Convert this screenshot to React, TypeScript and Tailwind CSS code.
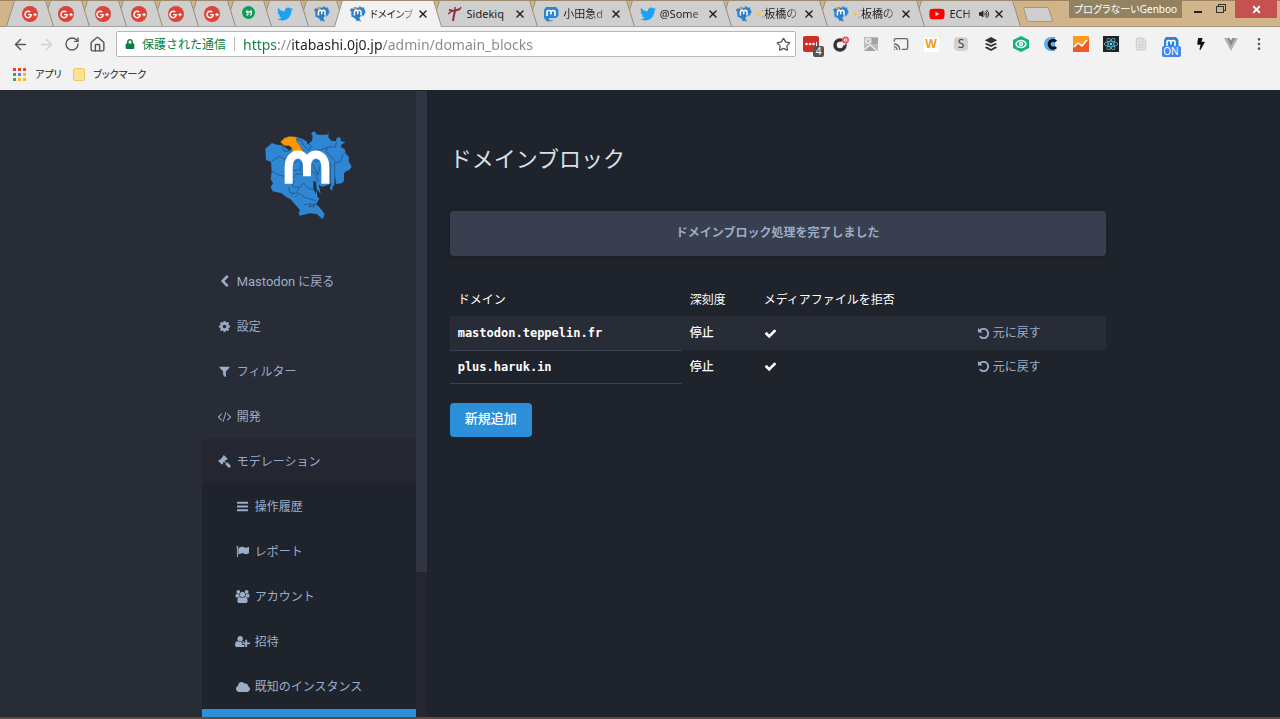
import type { ReactNode } from 'react';
import {
  FaBolt,
  FaCloud,
  FaGooglePlusG,
  FaLock,
  FaQuoteRight,
  FaReact,
  FaTwitter,
  FaVolumeUp,
  FaYoutube,
} from 'react-icons/fa';
import { SiBuffer } from 'react-icons/si';
import {
  ArrowLeft,
  ArrowRight,
  Cast,
  Eye,
  FileText,
  House,
  MoreVertical,
  RotateCw,
  Star,
  X,
} from 'lucide-react';

const glyphs = {
  back: 'M1427 301l-531 531 531 531q19 19 19 45t-19 45l-166 166q-19 19-45 19t-45-19l-742-742q-19-19-19-45t19-45l742-742q19-19 45-19t45 19l166 166q19 19 19 45t-19 45z',
  cog: 'M1152 896q0-106-75-181t-181-75-181 75-75 181 75 181 181 75 181-75 75-181zm512-109v222q0 12-8 23t-20 13l-185 28q-19 54-39 91 35 50 107 138 10 12 10 25t-9 23q-27 37-99 108t-94 71q-12 0-26-9l-138-108q-44 23-91 38-16 136-29 186-7 28-36 28h-222q-14 0-24.5-8.500t-11.500-21.500l-28-184q-49-16-90-37l-141 107q-10 9-25 9-14 0-25-11-126-114-165-168-7-10-7-23 0-12 8-23 15-21 51-66.500t54-70.500q-27-50-41-99l-183-27q-13-2-21-12.500t-8-23.500v-222q0-12 8-23t19-13l186-28q14-46 39-92-40-57-107-138-10-12-10-24 0-10 9-23 26-36 98.500-107.500t94.500-71.500q13 0 26 10l138 107q44-23 91-38 16-136 29-186 7-28 36-28h222q14 0 24.500 8.500t11.500 21.500l28 184q49 16 90 37l142-107q9-9 24-9 13 0 25 10 129 119 165 170 7 8 7 22 0 12-8 23-15 21-51 66.500t-54 70.500q26 50 41 98l183 28q13 2 21 12.500t8 23.500z',
  filter:
    'M1595 295q17 41-14 70l-493 493v742q0 42-39 59-13 5-25 5-27 0-45-19l-256-256q-19-19-19-45v-486l-493-493q-31-29-14-70 17-39 59-39h1280q42 0 59 39z',
  code: 'M553 1399l-50 50q-10 10-23 10t-23-10l-466-466q-10-10-10-23t10-23l466-466q10-10 23-10t23 10l50 50q10 10 10 23t-10 23l-393 393 393 393q10 10 10 23t-10 23zm591-1067l-373 1291q-4 13-15.500 19.500t-23.500 2.500l-62-17q-13-4-19.500-15.500t-2.500-24.500l373-1291q4-13 15.500-19.500t23.500-2.500l62 17q13 4 19.500 15.500t2.500 24.500zm657 651l-466 466q-10 10-23 10t-23-10l-50-50q-10-10-10-23t10-23l393-393-393-393q-10-10-10-23t10-23l50-50q10-10 23-10t23 10l466 466q10 10 10 23t-10 23z',
  gavel:
    'M1771 1536q0 53-37 90l-107 108q-39 37-91 37-53 0-90-37l-363-364q-38-36-38-90 0-53 43-96l-256-256-126 126q-14 14-34 14t-34-14q2 2 12.500 12t12.500 13 10 11.500 10 13.500 6 13.500 5.500 16.500 1.500 18q0 38-28 68-3 3-16.500 18t-19 20.500-18.500 16.500-22 15.500-22 9-26 4.500q-40 0-68-28l-408-408q-28-28-28-68 0-13 4.500-26t9-22 15.500-22 16.500-18.500 20.500-19 18-16.500q30-28 68-28 10 0 18 1.500t16.500 5.500 13.500 6 13.500 10 11.500 10 13 12.500 12 12.500q-14-14-14-34t14-34l348-348q14-14 34-14t34 14q-2-2-12.500-12t-12.500-13-10-11.500-10-13.500-6-13.500-5.500-16.500-1.500-18q0-38 28-68 3-3 16.500-18t19-20.500 18.500-16.500 22-15.500 22-9 26-4.500q40 0 68 28l408 408q28 28 28 68 0 13-4.500 26t-9 22-15.500 22-16.500 18.500-20.500 19-18 16.500q-30 28-68 28-10 0-18-1.500t-16.500-5.500-13.500-6-13.500-10-11.500-10-13-12.500-12-12.500q14 14 14 34t-14 34l-126 126 256 256q43-43 96-43 52 0 91 37l363 363q37 39 37 91z',
  bars: 'M1664 1344v128q0 26-19 45t-45 19h-1408q-26 0-45-19t-19-45v-128q0-26 19-45t45-19h1408q26 0 45 19t19 45zm0-512v128q0 26-19 45t-45 19h-1408q-26 0-45-19t-19-45v-128q0-26 19-45t45-19h1408q26 0 45 19t19 45zm0-512v128q0 26-19 45t-45 19h-1408q-26 0-45-19t-19-45v-128q0-26 19-45t45-19h1408q26 0 45 19t19 45z',
  flag: 'M320 256q0 72-64 110v1266q0 13-9.500 22.500t-22.500 9.500h-64q-13 0-22.500-9.500t-9.500-22.500v-1266q-64-38-64-110 0-53 37.500-90.500t90.500-37.500 90.500 37.500 37.500 90.500zm1472 64v763q0 25-12.500 38.500t-39.500 27.500q-215 116-369 116-61 0-123.500-22t-108.500-48-115.500-48-142.500-22q-192 0-464 146-17 9-33 9-26 0-45-19t-19-45v-742q0-32 31-55 21-14 79-43 236-120 421-120 107 0 200 29t219 88q38 19 88 19 54 0 117.500-21t110-47 88-47 54.500-21q26 0 45 19t19 45z',
  users:
    'M529 896q-162 5-265 128h-134q-82 0-138-40.500t-56-118.500q0-353 124-353 6 0 43.500 21t97.500 42.500 119 21.500q67 0 133-23-5 37-5 66 0 139 81 256zm1071 637q0 120-73 189.500t-194 69.500h-874q-121 0-194-69.500t-73-189.500q0-53 3.500-103.500t14-109 26.500-108.500 43-97.500 62-81 85.500-53.500 111.500-20q10 0 43 21.500t73 48 107 48 135 21.500 135-21.500 107-48 73-48 43-21.500q61 0 111.500 20t85.500 53.500 62 81 43 97.500 26.500 108.500 14 109 3.500 103.500zm-1024-1277q0 106-75 181t-181 75-181-75-75-181 75-181 181-75 181 75 75 181zm704 384q0 159-112.500 271.500t-271.500 112.500-271.500-112.500-112.500-271.500 112.500-271.500 271.500-112.500 271.500 112.500 112.500 271.500zm576 225q0 78-56 118.500t-138 40.500h-134q-103-123-265-128 81-117 81-256 0-29-5-66 66 23 133 23 59 0 119-21.500t97.500-42.500 43.500-21q124 0 124 353zm-128-609q0 106-75 181t-181 75-181-75-75-181 75-181 181-75 181 75 75 181z',
  userPlus:
    'M576 896q-159 0-271.500-112.500t-112.500-271.500 112.500-271.500 271.500-112.500 271.500 112.500 112.500 271.500-112.500 271.500-271.500 112.500zm960 128h352q13 0 22.500 9.500t9.500 22.500v192q0 13-9.500 22.500t-22.500 9.500h-352v352q0 13-9.500 22.500t-22.500 9.500h-192q-13 0-22.500-9.500t-9.500-22.500v-352h-352q-13 0-22.500-9.500t-9.500-22.500v-192q0-13 9.500-22.500t22.500-9.500h352v-352q0-13 9.500-22.500t22.500-9.500h192q13 0 22.500 9.500t9.500 22.500v352zm-736 224q0 52 38 90t90 38h256v238q-68 50-171 50h-874q-121 0-194-69t-73-190q0-53 3.500-103.500t14-109 26.500-108.500 43-97.500 62-81 85.500-53.500 111.500-20q19 0 39 17 79 61 154.500 91.500t164.500 30.500 164.500-30.500 154.500-91.500q20-17 39-17 132 0 217 96h-223q-52 0-90 38t-38 90v192z',
  check:
    'M1671 566q0 40-28 68l-724 724-136 136q-28 28-68 28t-68-28l-136-136-362-362q-28-28-28-68t28-68l136-136q28-28 68-28t68 28l294 295 656-657q28-28 68-28t68 28l136 136q28 28 28 68z',
  undo: 'M1664 896q0 156-61 298t-164 245-245 164-298 61q-172 0-327-72.500t-264-204.500q-7-10-6.500-22.500t8.500-20.500l137-138q10-9 25-9 16 2 23 12 73 95 179 147t225 52q104 0 198.500-40.500t163.500-109.500 109.500-163.500 40.500-198.500-40.500-198.500-109.500-163.500-163.500-109.500-198.500-40.500q-98 0-188 35.500t-160 101.500l137 138q31 30 14 69-17 40-59 40h-448q-26 0-45-19t-19-45v-448q0-42 40-59 39-17 69 14l130 129q107-101 244.500-156.500t284.500-55.500q156 0 298 61t245 164 164 245 61 298z',
};

const Glyph = ({ name }: { name: keyof typeof glyphs }) => (
  <svg viewBox="0 0 1792 1792" fill="currentColor" className="size-[13px] overflow-visible">
    <path d={glyphs[name]} />
  </svg>
);

const MapLogo = ({ className }: { className: string }) => (
  <svg viewBox="75 65 261 267" className={className} aria-hidden="true">
    <path
      fill="#2f86d3"
      d="M76 118L96 101 110 106 126 108 150 124 172 84 186 88 200 96 203 106 216 94 218 80 213 72 222 66 232 76 262 76 266 69 265 84 274 94 288 96 290 86 300 83 303 96 317 98 306 105 302 112 314 120 318 134 327 144 326 156 335 172 328 182 318 186 312 192 312 214 306 222 288 224 286 202 283 226 278 232 276 245 269 236 276 220 266 226 248 234 236 226 242 254 230 238 232 262 238 268 228 284 238 294 254 314 248 330 230 314 210 312 178 319 176 310 180 302 164 284 152 270 140 264 124 252 98 246 92 232 99 222 92 210 95 188 93 158 78 152z"
    />
    <path fill="#282c37" d="M220 214l8 4 2 22-2 14-8-16zM246 232l22-6-14 14z" />
    <path
      fill="#ff9800"
      stroke="#1f4166"
      strokeWidth="1"
      d="M121 98l12-12 16-5 22 2-2 12 10 12 11 20v6l-35-2 2-14-10-8-14 0z"
    />
    <path
      fill="none"
      stroke="#1c4876"
      strokeWidth="2"
      d="M94 156l12-8 14-7 10 8 6-2M96 186l20 11 18 4M126 106l6 20 18-2M170 90l14 4 8 16 14 14 8-14-10-8M230 122l16-1 20-8 20 0 4-15M262 114l-4 12 12 12 18 22 14-3 4-16 9-12M160 162l14-8 10 10-4 18 14 10M160 184l16-2M158 206l10-12 24 0M214 146l10 10 18-2M216 162l18 34M212 184l16 10 6 24M240 170l-6 26M272 160l-1 60M284 160v62M146 234l4 16 18 2 10-16 14-16M158 232l20 2M162 214l-6 16M192 222l10 14 18 6M166 262l10-10 22 14 16 4 14 4M152 262l8-10M192 286l14-2 22 1M206 292l20-2M212 284l-3 10M220 284l1 12"
    />
    <path
      fill="none"
      stroke="#fff"
      strokeWidth="24"
      d="M146 223v-50c0-50 55-50 55-2v30m0-30c0-48 55-48 55 2v50"
    />
  </svg>
);

const MastodonBadge = () => (
  <svg viewBox="0 0 16 16" className="size-4 shrink-0">
    <path fill="#2b85d2" d="M3 1h10l2.500 3v6L13 12H6v2l5 1-7 .5L1 12V4z" />
    <path fill="none" stroke="#fff" strokeWidth="1.600" d="M4 10V6c0-2 4-2 4 0v2.500V6c0-2 4-2 4 0v4" />
  </svg>
);

const GooglePlus = () => (
  <span className="flex size-4 items-center justify-center rounded-full bg-[#db4437] text-white">
    <FaGooglePlusG size={13} />
  </span>
);

const Hangouts = () => (
  <span className="flex size-4 justify-center">
    <span className="flex h-[13px] w-[13px] items-center justify-center rounded-full bg-[#0f9d58] text-white">
      <FaQuoteRight size={6} />
    </span>
  </span>
);

const Kick = () => (
  <svg viewBox="0 0 16 16" className="size-4 shrink-0" fill="none" stroke="#8f2f35">
    <path strokeWidth="2" d="M2 4l5 1 6-2M8 5l-1 4-1 6" />
    <path strokeWidth="1.500" d="M1 8l4-3M8 1v4M13 3l1-2" />
  </svg>
);

interface TabInfo {
  label: string;
  icon: ReactNode;
  title?: string;
  sparkle?: boolean;
  active?: boolean;
  audible?: boolean;
}

const pinned: TabInfo[] = [
  ...Array.from({ length: 6 }, () => ({ label: 'Google+', icon: <GooglePlus /> })),
  { label: 'Hangouts', icon: <Hangouts /> },
  { label: 'Twitter', icon: <FaTwitter size={16} color="#1da1f2" /> },
  { label: 'Mastodon', icon: <MapLogo className="size-4" /> },
];

const tabs: TabInfo[] = [
  { label: 'ドメインブロック', title: 'ドメインブ', icon: <MapLogo className="size-4 shrink-0" />, active: true },
  { label: 'Sidekiq', title: 'Sidekiq', icon: <Kick /> },
  { label: '小田急', title: '小田急d', icon: <MastodonBadge /> },
  { label: 'Twitter', title: '@Some', icon: <FaTwitter size={16} color="#1da1f2" className="shrink-0" /> },
  { label: '板橋', title: '板橋の', sparkle: true, icon: <MapLogo className="size-4 shrink-0" /> },
  { label: '板橋', title: '板橋の', sparkle: true, icon: <MapLogo className="size-4 shrink-0" /> },
  { label: 'YouTube', title: 'ECH', audible: true, icon: <FaYoutube size={16} color="#f00" className="shrink-0" /> },
];

const Sparkle = () => (
  <svg viewBox="0 0 10 14" className="h-3 w-2 shrink-0">
    <path fill="#fbc531" d="M3 3l1 3 3 1-3 1-1 3-1-3-2-1 2-1z" />
    <circle cx="8" cy="3" r="1.300" fill="#f78fb3" />
    <circle cx="8" cy="11" r="1.300" fill="#5cc6ee" />
  </svg>
);

const Tab = ({ tab, order }: { tab: TabInfo; order: number }) => {
  const face = tab.active ? 'bg-[#f2f2f2]' : 'bg-[#cfcfcf]';
  const fade =
    tab.title === 'Sidekiq' ? '' : '[mask-image:linear-gradient(to_right,#000_60%,rgba(0,0,0,0.3))]';
  return (
    <div className="relative h-[27px] min-w-0 flex-1" style={{ zIndex: tab.active ? 50 : order }}>
      <div className="absolute inset-y-0 left-1 -right-[7px]">
        <div className={`absolute inset-y-0 left-0 right-1/2 -skew-x-[17deg] border-l border-t border-[#9b8a6e] ${face}`} />
        <div className={`absolute inset-y-0 left-1/2 right-0 skew-x-[17deg] border-r border-t border-[#9b8a6e] ${face}`} />
        <div className={`absolute inset-y-0 left-1/4 right-1/4 border-t border-[#9b8a6e] ${face}`} />
        {!tab.active && <div className="absolute bottom-0 -left-1 -right-1 h-px bg-[#a3a3a3]" />}
      </div>
      <div className="relative flex h-full items-center pl-4 pt-px">
        <button aria-label={tab.label} className="flex items-center gap-1">
          {tab.icon}
          {tab.title && (
            <span
              className={`flex items-center whitespace-nowrap leading-4 [font-feature-settings:'palt'] ${fade} ${
                tab.audible ? 'w-[26px]' : 'w-[46px]'
              } ${tab.active ? 'text-[10px]' : 'text-[11px]'}`}
            >
              {tab.sparkle && <Sparkle />}
              {tab.title}
            </span>
          )}
        </button>
        {tab.audible && <FaVolumeUp size={10} className="ml-1 shrink-0" />}
        {tab.title && (
          <button aria-label="閉じる" className={tab.audible ? 'ml-1' : 'ml-px'}>
            <X size={12} strokeWidth={3} />
          </button>
        )}
      </div>
    </div>
  );
};

const extensions: { name: string; icon: ReactNode }[] = [
  {
    name: 'LastPass',
    icon: (
      <span className="relative flex size-4 items-center justify-center rounded-xs bg-[#d32d27]">
        <svg viewBox="0 0 16 16" className="size-4" fill="#fff">
          <circle cx="3.500" cy="8" r="1.300" />
          <circle cx="7" cy="8" r="1.300" />
          <circle cx="10.500" cy="8" r="1.300" />
          <path d="M13 6h1v4h-1z" />
        </svg>
        <span className="absolute -right-[5px] -bottom-[5px] flex h-[11px] w-[11px] items-center justify-center rounded-xs bg-[#555] text-[10px] text-white">
          4
        </span>
      </span>
    ),
  },
  {
    name: 'Checker',
    icon: (
      <svg viewBox="0 0 16 16" className="size-4">
        <circle cx="7" cy="9" r="5" fill="none" stroke="#333" strokeWidth="3.500" />
        <path fill="#f2f2f2" d="M8 5l6 1-3 4z" />
        <circle cx="12.500" cy="4" r="3.500" fill="#f44d55" />
        <circle cx="12.500" cy="4" r="1.300" fill="none" stroke="#fff" />
      </svg>
    ),
  },
  {
    name: 'Search',
    icon: (
      <svg viewBox="0 0 16 16" className="size-4">
        <path fill="#bdbdbd" d="M1 1h14v14H1z" />
        <path fill="#a2a2a2" d="M9 2h6v6H9zM1 15l6-6 7 6z" />
        <circle cx="5" cy="5" r="2.300" fill="none" stroke="#eee" strokeWidth="1.300" />
        <path fill="none" stroke="#eee" strokeWidth="1.300" d="M1 14l6-5 7 6" />
      </svg>
    ),
  },
  { name: 'Cast', icon: <Cast size={16} color="#666" /> },
  {
    name: 'Wappalyzer',
    icon: (
      <span className="flex size-[15px] items-center justify-center bg-white text-[12px] font-bold text-[#f39c12]">W</span>
    ),
  },
  {
    name: 'Stylish',
    icon: (
      <span className="flex size-[14px] items-center justify-center rounded-sm bg-[#d2d2d2] text-[12px] text-[#444]">S</span>
    ),
  },
  { name: 'Buffer', icon: <SiBuffer size={14} color="#333" /> },
  {
    name: 'Viewer',
    icon: (
      <span className="relative flex size-4 items-center justify-center bg-[#13b27f] [clip-path:polygon(50%_0,100%_25%,100%_75%,50%_100%,0_75%,0_25%)]">
        <Eye size={12} color="#fff" strokeWidth={3} />
      </span>
    ),
  },
  {
    name: 'Clip',
    icon: (
      <svg viewBox="0 0 16 16" className="size-4">
        <path fill="#58aef0" d="M12 1H8a7 7 0 0 0 0 14h4z" />
        <path fill="none" stroke="#111" strokeWidth="3" d="M13 5.500a4 4 0 1 0 0 5.500" />
      </svg>
    ),
  },
  {
    name: 'Analytics',
    icon: (
      <svg viewBox="0 0 16 16" className="size-4">
        <rect width="16" height="16" rx="1" fill="#fb9a1c" />
        <path fill="#ef5a28" d="M0 12l5-5 4 3 7-7v13H0z" />
        <path fill="none" stroke="#fff" strokeWidth="1.500" d="M1 11l4-4 4 3 5-6" />
      </svg>
    ),
  },
  {
    name: 'React',
    icon: (
      <span className="flex size-4 items-center justify-center bg-[#222] text-[#61dafb]">
        <FaReact size={14} />
      </span>
    ),
  },
  { name: 'Pages', icon: <FileText size={14} color="#d0d0d0" fill="#e2e2e2" /> },
  {
    name: 'Mastodon',
    icon: (
      <span className="relative flex size-4 items-start justify-center">
        <MastodonBadge />
        <span className="absolute top-[10px] flex h-[11px] w-[19px] items-center justify-center rounded-xs bg-[#4285f4] text-[10px] text-white">
          ON
        </span>
      </span>
    ),
  },
  { name: 'Amp', icon: <FaBolt size={12} color="#111" /> },
  {
    name: 'Vue',
    icon: (
      <svg viewBox="0 0 16 16" className="size-4">
        <path fill="#b3b3b3" d="M1 2h14L8 15z" />
        <path fill="#8b8b8b" d="M4 2h8L8 10z" />
        <path fill="#f2f2f2" d="M6.500 2h3L8 4.500z" />
      </svg>
    ),
  },
  { name: 'メニュー', icon: <MoreVertical size={16} color="#555" /> },
];

const appColors = [
  'bg-[#ea4335]',
  'bg-[#ea4335]',
  'bg-[#ea4335]',
  'bg-[#34a853]',
  'bg-[#4285f4]',
  'bg-[#fbbc05]',
  'bg-[#34a853]',
  'bg-[#fbbc05]',
  'bg-[#fbbc05]',
];

const Browser = () => (
  <header className="border-b border-[#24262d] bg-[#f2f2f2] font-['Noto_Sans','Noto_Sans_CJK_JP',sans-serif] text-[#222]">
    <div className="flex h-[27px] justify-between border-t border-[#9b8260] bg-[#d2b48a] shadow-[inset_0_-1px_#a3957d]">
      <div className="-mt-px flex pl-[6px]">
        <div className="isolate z-10 flex w-[328px]">
          {pinned.map((tab, index) => (
            <Tab key={index} tab={tab} order={20 - index} />
          ))}
        </div>
        <div className="isolate z-20 flex w-[676px]">
          {tabs.map((tab, index) => (
            <Tab key={index} tab={tab} order={20 - index} />
          ))}
        </div>
        <button
          aria-label="新しいタブ"
          className="ml-[15px] mt-[7px] h-[15px] w-[26px] skew-x-[17deg] rounded-xs border border-[#a3957d] bg-[#cfcfcf]"
        />
      </div>
      <div className="-mt-px flex items-start">
        <button className="h-[18px] w-[113px] whitespace-nowrap bg-[#928261] text-[10px] leading-[17px] text-white [font-feature-settings:'palt']">
          プログラなーいGenboo
        </button>
        <button aria-label="最小化" className="flex h-[18px] w-8 items-center justify-center pt-[5px]">
          <span className="h-[2px] w-2 bg-[#222]" />
        </button>
        <button aria-label="元のサイズに戻す" className="relative h-[18px] w-[21px]">
          <span className="absolute left-[4px] top-[4px] h-[7px] w-[8px] border border-[#333]" />
          <span className="absolute left-[2px] top-[6px] h-[7px] w-[8px] border border-[#333] bg-[#d2b48a]" />
        </button>
        <button aria-label="閉じる" className="mr-[3px] flex h-[18px] w-[42px] items-center justify-center bg-[#c75050] text-white">
          <X size={11} strokeWidth={4} />
        </button>
      </div>
    </div>
    <div className="flex h-[34px] items-center pl-3 pr-2 text-[#555]">
      <div className="flex w-[104px] gap-[9px]">
        <button aria-label="戻る"><ArrowLeft size={17} /></button>
        <button aria-label="進む" className="text-[#d0d0d0]"><ArrowRight size={17} /></button>
        <button aria-label="再読み込み"><RotateCw size={16} /></button>
        <button aria-label="ホーム"><House size={17} /></button>
      </div>
      <div className="flex h-[26px] min-w-0 flex-1 items-center rounded-xs border border-[#b8b8b8] bg-white pl-2 pr-1">
        <FaLock size={10} color="#0b8043" className="shrink-0" />
        <span className="ml-[7px] w-[84px] whitespace-nowrap pt-px text-[12px] text-[#0b8043]">保護された通信</span>
        <span className="ml-2 mr-[8px] h-[14px] w-px bg-[#bbb]" />
        <input
          aria-label="アドレス"
          readOnly
          value="https://itabashi.0j0.jp/admin/domain_blocks"
          className="min-w-0 flex-1 bg-[linear-gradient(to_right,#0b8043_35px,#888_35px_49px,#222_49px_139px,#888_139px)] bg-clip-text text-[14px] text-transparent outline-none"
        />
        <button aria-label="ブックマークに追加"><Star size={15} /></button>
      </div>
      <div className="flex">
        {extensions.map((extension, index) => (
          <button
            key={extension.name}
            aria-label={extension.name}
            className={`flex h-5 items-center justify-center ${index === extensions.length - 1 ? 'w-[26px]' : 'w-[30px]'}`}
          >
            {extension.icon}
          </button>
        ))}
      </div>
    </div>
    <nav className="flex h-[29px] items-center pb-[3px] pl-[13px] text-[10px] text-[#222] [font-feature-settings:'palt']">
      <a href="#apps" className="flex w-[60px] items-center gap-[9px]">
        <span className="grid grid-cols-3 gap-[2px]">
          {appColors.map((color, index) => (
            <span key={index} className={`size-[3px] ${color}`} />
          ))}
        </span>
        アプリ
      </a>
      <a href="#bookmarks" className="flex items-center gap-2">
        <span className="h-[13px] w-3 rounded-xs border border-[#efc75e] bg-[#fde293]" />
        ブックマーク
      </a>
    </nav>
  </header>
);

const menu = [
  { label: '設定', icon: <Glyph name="cog" /> },
  { label: 'フィルター', icon: <Glyph name="filter" /> },
  { label: '開発', icon: <Glyph name="code" /> },
];

const moderation = [
  { label: '操作履歴', icon: <Glyph name="bars" /> },
  { label: 'レポート', icon: <Glyph name="flag" /> },
  { label: 'アカウント', icon: <Glyph name="users" /> },
  { label: '招待', icon: <Glyph name="userPlus" /> },
  { label: '既知のインスタンス', icon: <FaCloud size={14} /> },
];

const NavItem = ({ icon, children, className = 'pl-[15px]' }: { icon: ReactNode; children: ReactNode; className?: string }) => (
  <li>
    <a href="#" className={`flex h-[45px] items-center gap-1 ${className}`}>
      <span className="flex w-4 justify-center">{icon}</span>
      <span>{children}</span>
    </a>
  </li>
);

const Sidebar = () => (
  <aside className="flex min-w-0 flex-1 bg-[#282c37]">
    <div className="flex flex-1 justify-end overflow-hidden">
      <div className="w-[214px]">
        <a href="#" aria-label="Mastodon" className="mb-[39px] mt-10 flex justify-center">
          <MapLogo className="h-[89px] w-[87px]" />
        </a>
        <ul className="text-[12px] leading-[18px] text-[#9baec8]">
          <NavItem icon={<Glyph name="back" />}>
            <span className="text-[13px]">Mastodon</span> に戻る
          </NavItem>
          {menu.map((item) => (
            <NavItem key={item.label} icon={item.icon}>
              {item.label}
            </NavItem>
          ))}
          <NavItem icon={<Glyph name="gavel" />} className="rounded-tl bg-[#242731] pl-[15px]">
            モデレーション
          </NavItem>
          <li>
            <ul className="bg-[#1f232b]">
              {moderation.map((item) => (
                <NavItem key={item.label} icon={item.icon} className="pl-[33px]">
                  {item.label}
                </NavItem>
              ))}
            </ul>
          </li>
          <li className="h-[45px] bg-[#2b90d9]" />
        </ul>
      </div>
    </div>
    <div className="w-[11px] bg-[#242730]">
      <div className="h-[481px] bg-[#313543]" />
    </div>
  </aside>
);

const domains = ['mastodon.teppelin.fr', 'plus.haruk.in'];

const Content = () => (
  <main className="min-w-0 flex-[2] text-[12px] leading-[18px] text-white">
    <div className="mx-[23px] max-w-[656px]">
      <h2 className="mt-[51px] text-[22px] leading-9 text-[#d9e1e8]">ドメインブロック</h2>
      <div className="mt-[33px] flex h-[45px] items-center justify-center rounded bg-[#393f4f] pb-px font-bold text-[#9baec8] shadow-[0_0_5px_rgba(0,0,0,0.2)]">
        ドメインブロック処理を完了しました
      </div>
      <table className="mt-[26px] w-full table-fixed text-left">
        <colgroup>
          <col className="w-[232px]" />
          <col className="w-[74px]" />
          <col className="w-[213px]" />
          <col />
        </colgroup>
        <thead>
          <tr className="h-[34px]">
            <th className="px-2 pt-px font-normal">ドメイン</th>
            <th className="px-2 pt-px font-normal">深刻度</th>
            <th className="px-2 pt-px font-normal">メディアファイルを拒否</th>
            <th />
          </tr>
        </thead>
        <tbody>
          {domains.map((domain) => (
            <tr key={domain} className="h-[33px] odd:h-[34px] odd:bg-[#282c37]">
              <td className="border-b border-[#393f4f] px-2">
                <samp className="font-['DejaVu_Sans_Mono',monospace] font-bold">{domain}</samp>
              </td>
              <td className="px-2 font-medium">停止</td>
              <td className="px-2">
                <Glyph name="check" />
              </td>
              <td className="px-2">
                <a href="#" className="flex items-center gap-[3px] text-[#9baec8]">
                  <Glyph name="undo" />
                  元に戻す
                </a>
              </td>
            </tr>
          ))}
        </tbody>
      </table>
      <button className="mt-[19px] h-[34px] rounded bg-[#2b90d9] px-[15px] pb-px text-[13px] font-medium">新規追加</button>
    </div>
  </main>
);

const App = () => (
  <div className="flex h-screen flex-col overflow-hidden border-b-2 border-[#5b4d3e] bg-[#1f232b]">
    <Browser />
    <div className="flex min-h-0 flex-1 overflow-hidden font-['Roboto','Noto_Sans_CJK_JP',sans-serif]">
      <Sidebar />
      <Content />
    </div>
  </div>
);

export default App;
